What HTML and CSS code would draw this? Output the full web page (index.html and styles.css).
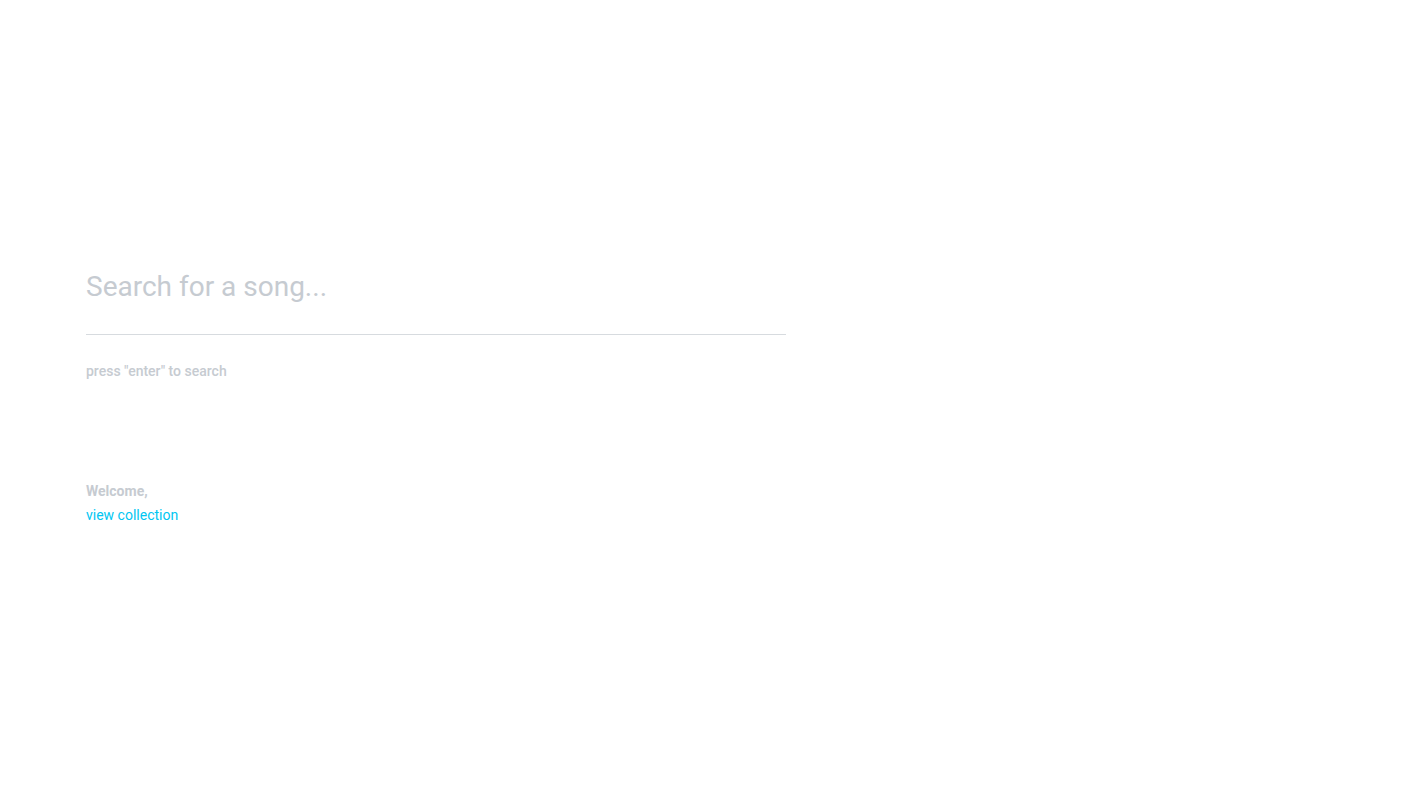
FILE: index.html
```html
<!DOCTYPE html>
<html>
<head>
<meta charset="utf-8">
<link rel="stylesheet" href="styles.css">
</head>
<body>
<main class="page">
  <section class="search">
    <input class="search-input" type="text" placeholder="Search for a song...">
    <p class="hint">press "enter" to search</p>
  </section>
  <section class="user">
    <p class="welcome">Welcome,</p>
    <a class="link" href="#">view collection</a>
  </section>
</main>
</body>
</html>
```
FILE: styles.css
```css
html, body {
  margin: 0;
  padding: 0;
  background: #ffffff;
  font-family: Roboto, "Liberation Sans", sans-serif;
}
.page {
  padding: 264px 0 0 86px;
  width: 700px;
}
.search {
  display: flex;
  flex-direction: column;
}
.search-input {
  width: 700px;
  box-sizing: border-box;
  border: none;
  border-bottom: 1px solid #d7dbdf;
  outline: none;
  padding: 0 0 26px 0;
  margin: 0;
  height: 71px;
  font-family: Roboto, "Liberation Sans", sans-serif;
  font-size: 28px;
  color: #3a3f45;
  background: transparent;
}
.search-input::placeholder {
  color: #c6cbd1;
}
.hint {
  margin: 27px 0 0 0;
  font-size: 14px;
  font-weight: 500;
  color: #c6cbd1;
  line-height: 18px;
}
.user {
  margin-top: 102px;
  display: flex;
  flex-direction: column;
  gap: 6px;
}
.welcome {
  margin: 0;
  font-size: 14px;
  font-weight: 700;
  color: #c6cbd1;
  line-height: 18px;
}
.link {
  font-size: 14px;
  color: #00c6f2;
  text-decoration: none;
  line-height: 18px;
}
```
